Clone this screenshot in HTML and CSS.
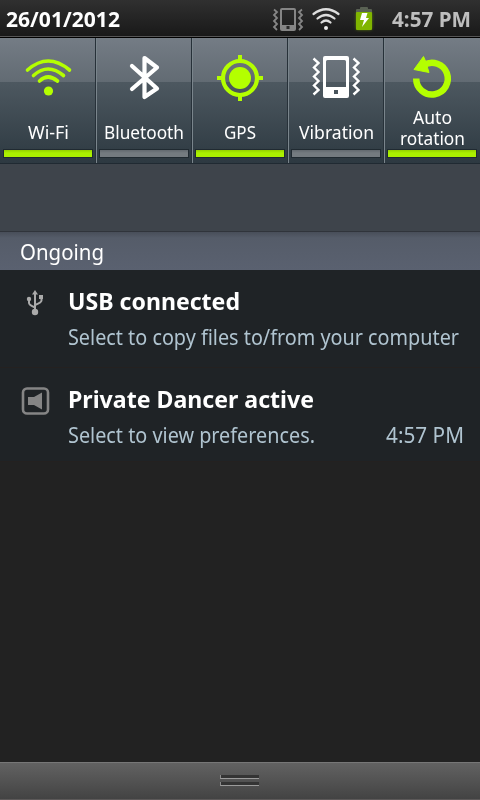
FILE: index.html
```html
<!DOCTYPE html>
<html lang="en">
<head>
<meta charset="utf-8">
<title>Notifications</title>
<link rel="stylesheet" href="styles.css">
</head>
<body>
<header class="status">
  <span class="date"><span class="fit fit-date">26/01/2012</span></span>
  <svg class="status-icons" width="110" height="36" viewBox="0 0 110 36">
    <g fill="none" stroke="#858585">
      <rect x="11" y="9" width="14" height="21" rx="1" stroke-width="2"/>
      <path d="M11 27.500H25" stroke-width="5"/>
      <path d="M4 9.500l3 2.500-3 3 3 3-3 3 3 3-3 3 3 3M32 9.500l-3 2.500 3 3-3 3 3 3-3 3 3 3-3 3" stroke-width="1.800"/>
    </g>
    <rect x="16.500" y="26" width="3" height="3" fill="#292929"/>
    <g fill="none" stroke="#dedede" stroke-width="2.200" stroke-linecap="round">
      <path d="M43.500 14Q56 4.500 68.500 14M47.500 18.500Q56 11.500 64.500 18.500M51.500 22.500Q56 18.500 60.500 22.500"/>
    </g>
    <circle cx="56" cy="28" r="2" fill="#eee"/>
    <rect class="battery-glow" x="86" y="12" width="16" height="18" rx="2"/>
    <path d="M86 13V10q0-1 1-1h3V8q0-1 1-1h6q1 0 1 1v1h3q1 0 1 1v3z" fill="#596153"/>
    <rect x="86" y="12" width="16" height="18" rx="1" fill="#80b500"/>
    <path d="M92 13h5.500l-1.500 5h3l-7 9 2-7h-4z" fill="#fff"/>
  </svg>
  <span class="clock"><span class="fit fit-clock">4:57 PM</span></span>
</header>

<nav class="tiles">
  <div class="tile on">
    <svg class="icon" viewBox="0 0 96 68">
      <g fill="none" stroke="#b4ff00" stroke-width="3.600" stroke-linecap="round">
        <path d="M27.500 32Q48 14 69.500 32M33.500 37.500Q48 24.500 63.500 37.500M39.500 43Q48 35 57.500 43"/>
      </g>
      <circle cx="48.500" cy="53" r="4.600" fill="#b4ff00"/>
    </svg>
    <div class="label"><span class="fit fit-wifi">Wi-Fi</span></div>
    <div class="bar"></div>
  </div>
  <div class="tile">
    <svg class="icon" viewBox="0 0 96 68">
      <path d="M36 28L61 50.500 48.500 59V20L61 29.500 36 51" fill="none" stroke="#fff" stroke-width="4.200" stroke-linecap="round" stroke-linejoin="round"/>
    </svg>
    <div class="label"><span class="fit fit-bt">Bluetooth</span></div>
    <div class="bar"></div>
  </div>
  <div class="tile on">
    <svg class="icon" viewBox="0 0 96 68">
      <circle cx="48" cy="40" r="17" fill="none" stroke="#b4ff00" stroke-width="4.200"/>
      <circle cx="48" cy="40" r="11" fill="#b4ff00"/>
      <path d="M48 17v6M48 57v6M25 40h6M65 40h6" stroke="#b4ff00" stroke-width="4"/>
    </svg>
    <div class="label"><span class="fit fit-gps">GPS</span></div>
    <div class="bar"></div>
  </div>
  <div class="tile">
    <svg class="icon" viewBox="0 0 96 68">
      <path fill="#fff" fill-rule="evenodd" d="M37 18h22q2 0 2 2v38q0 2-2 2H37q-2 0-2-2V20q0-2 2-2zM39.500 22q-1.500 0-1.500 1.500V49h20V23.500q0-1.500-1.500-1.500zM46 52v4h4v-4z"/>
      <path d="M25.500 20.500l5 4.500-4.500 4.500 4.500 4.500-4.500 4.500 4.500 4.500-4.500 4.500 4.500 4.500-5 4.500M65.500 20.500l5 4.500-4.500 4.500 4.500 4.500-4.500 4.500 4.500 4.500-4.500 4.500 4.500 4.500-5 4.500" fill="none" stroke="#fff" stroke-width="2.400"/>
    </svg>
    <div class="label"><span class="fit fit-vib">Vibration</span></div>
    <div class="bar"></div>
  </div>
  <div class="tile on">
    <svg class="icon" viewBox="0 0 96 68">
      <path d="M32.200 40.500A15.800 15.800 0 1 0 40 27" fill="none" stroke="#b4ff00" stroke-width="6.500"/>
      <path d="M30 31.500L39.500 18.500l2 4.500L45 34.500z" fill="#b4ff00" stroke="#b4ff00" stroke-linejoin="round"/>
    </svg>
    <div class="label two"><span class="fit fit-auto">Auto</span><span class="fit fit-rot">rotation</span></div>
    <div class="bar"></div>
  </div>
</nav>

<div class="carrier"></div>
<h2 class="section"><span class="fit fit-ongoing">Ongoing</span></h2>

<main class="list">
  <article class="row">
    <svg class="row-icon" viewBox="0 0 30 30">
      <g fill="none" stroke="#aaa" stroke-width="2">
        <path d="M15 4v20M9 11v3q0 2 6 4.500M21.500 8v3.500q0 2-6.500 4.500"/>
      </g>
      <g fill="#aaa"><path d="M12 5.500l3-4.500 3 4.500z"/><circle cx="15" cy="23" r="3.200"/><circle cx="9" cy="10" r="2.200"/><path d="M19 6h4v4h-4z"/></g>
    </svg>
    <div class="body">
      <h3><span class="fit fit-usb">USB connected</span></h3>
      <p><span class="fit fit-copy">Select to copy files to/from your computer</span></p>
    </div>
  </article>
  <article class="row">
    <svg class="row-icon" viewBox="0 0 30 30">
      <rect x="3" y="2.500" width="25" height="25" rx="4" fill="none" stroke="#858585" stroke-width="2.600"/>
      <path d="M8 11h6l8-4.500v17l-8-4.500H8z" fill="#858585"/>
    </svg>
    <div class="body">
      <h3><span class="fit fit-dancer">Private Dancer active</span></h3>
      <p><span class="fit fit-pref">Select to view preferences.</span><span class="fit fit-time">4:57 PM</span></p>
    </div>
  </article>
</main>

<footer class="handle"><div class="grip"></div><div class="grip"></div></footer>
<script src="fit.js"></script>
</body>
</html>
```

FILE: fit.js
```js
// Condense each text run to the width given by its --w property.
document.querySelectorAll('.fit').forEach(function (el) {
  var target = parseFloat(getComputedStyle(el).getPropertyValue('--w'));
  var natural = el.getBoundingClientRect().width;
  el.style.width = target + 'px';
  el.style.transform = 'scaleX(' + target / natural + ')';
});
```

FILE: styles.css
```css
* { box-sizing: border-box; }
body {
  margin: 0;
  width: 480px;
  height: 800px;
  display: flex;
  flex-direction: column;
  overflow: hidden;
  background: #222;
  color: #fff;
  font-family: "Noto Sans", "Open Sans", sans-serif;
}
h2, h3, p { margin: 0; }
.fit { display: inline-block; white-space: nowrap; transform-origin: 0 50%; }

.status {
  height: 38px;
  flex: none;
  display: flex;
  align-items: flex-start;
  padding: 0 0 0 6px;
  background: linear-gradient(#303030, #191919 36px, #555 36px, #555 37px, #000 37px);
  font-weight: 700;
  font-size: 20.500px;
  line-height: 38px;
}
.date { width: 264px; }
.status-icons { flex: none; }
.clock { margin-left: 12px; color: #bebebe; }
.battery-glow { fill: #80b500; opacity: .6; filter: blur(1.500px); }
.fit-date { --w: 114px; }
.fit-clock { --w: 79px; }

.tiles {
  height: 126px;
  flex: none;
  display: grid;
  grid-template-columns: repeat(5, 96px);
  border-bottom: 1px solid #202a32;
}
.tile {
  display: flex;
  flex-direction: column;
  border-right: 1px solid #273139;
  border-left: 1px solid #7a858c;
  background: linear-gradient(#747c85, #626b73 44px, #4d5860 44px, #2d3941);
}
.tile:first-child { border-left: 0; }
.tile:last-child { border-right: 0; }
.icon { width: 96px; height: 68px; margin: 0 -1px; flex: none; }
.tile:first-child .icon { margin-left: 0; }
.label {
  height: 42px;
  padding-top: 15px;
  font-size: 18.500px;
  line-height: 22px;
  text-align: center;
}
.label.two {
  display: flex;
  flex-direction: column;
  align-items: center;
  padding-top: 0;
  line-height: 21px;
}
.bar { height: 9px; width: 90px; margin: 1px 0 0 2px; border: 1px solid #202a31; background: linear-gradient(#62696f, #747b80 3px); }
.tile:first-child .bar { margin-left: 3px; }
.on .bar { background: linear-gradient(#94d000, #abf000 3px); }
.fit-wifi { --w: 41px; }
.tile:first-child .label { padding-left: 1px; }
.fit-bt { --w: 80px; }
.fit-gps { --w: 32px; }
.fit-vib { --w: 75px; }
.fit-auto { --w: 39px; }
.fit-rot { --w: 65px; }

.carrier { height: 67px; flex: none; background: #3e444b; }
.section {
  height: 40px;
  flex: none;
  padding: 0 0 0 20px;
  border-top: 1px solid #30343b;
  border-bottom: 1px solid #3c424d;
  background: linear-gradient(#484e59, #555c69 6px, #5a6170);
  font-size: 22.500px;
  font-weight: 400;
  line-height: 40px;
}
.fit-ongoing { --w: 84px; }

.row { display: flex; height: 98px; padding: 15px 16px 0 20px; background: #1f2326; border-bottom: 1px solid #242120; }
.row:last-child { height: 94px; }
.list { margin-top: -1px; }
.row-icon { width: 30px; height: 30px; margin: 4px 18px 0 0; flex: none; }
.row:last-child .row-icon { margin-top: 3px; }
.body { flex: 1; }
.row h3 { font-size: 24px; line-height: 32px; height: 32px; }
.row p { display: flex; justify-content: space-between; margin-top: 3px; font-size: 22px; line-height: 32px; color: #b0c4d0; }
.fit-usb { --w: 172px; }
.fit-copy { --w: 391px; }
.fit-dancer { --w: 246px; }
.fit-pref { --w: 247px; }
.fit-time { --w: 78px; }

.handle {
  margin-top: auto;
  height: 38px;
  flex: none;
  display: flex;
  flex-direction: column;
  align-items: center;
  gap: 3px;
  padding: 12px 1px 0 0;
  border-top: 1px solid #777;
  border-bottom: 1px solid #5c5959;
  background: linear-gradient(#626262, #434343);
}
.grip { width: 39px; height: 4px; background: #343434; border-left: 1px solid #8b8b8b; border-bottom: 1px solid #9b9b9b; }
```
